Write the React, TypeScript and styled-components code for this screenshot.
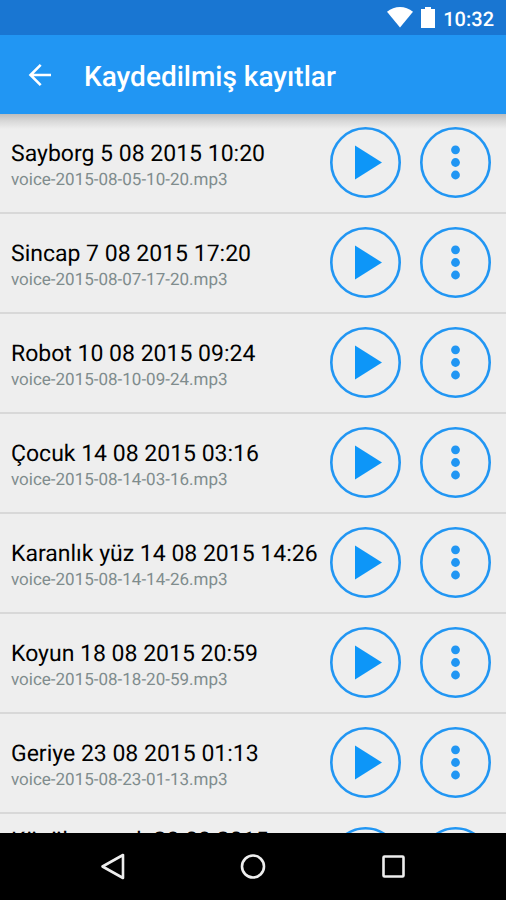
import React from "react";
import styled, { createGlobalStyle } from "styled-components";

const GlobalStyle = createGlobalStyle`
  * { box-sizing: border-box; }
  body {
    margin: 0;
    font-family: Roboto, "Noto Sans", sans-serif;
    text-rendering: geometricPrecision;
    background: #eeeeee;
  }
  button { margin: 0; padding: 0; border: 0; background: none; font: inherit; cursor: pointer; }
`;

const Screen = styled.div`
  display: flex;
  flex-direction: column;
  height: 100vh;
  overflow: hidden;
`;

const StatusBar = styled.div`
  flex: none;
  display: flex;
  align-items: center;
  justify-content: flex-end;
  gap: 8px;
  height: 35px;
  padding: 0 12px;
  background: #1976d2;
  color: #ffffff;
`;

const StatusIcon = styled.svg`
  display: block;
`;

const Clock = styled.time`
  padding-top: 2px;
  font-size: 20px;
  line-height: 24px;
  font-weight: 500;
`;

const AppBar = styled.header`
  flex: none;
  display: flex;
  align-items: center;
  height: 79px;
  padding: 0 24px;
  background: #2196f3;
  color: #ffffff;
`;

const BackButton = styled.button`
  display: flex;
  align-items: center;
  justify-content: center;
  width: 32px;
  height: 48px;
  margin-right: 28px;
  color: inherit;
`;

const Title = styled.h1`
  margin: 0;
  padding-top: 4px;
  font-size: 28px;
  line-height: 36px;
  font-weight: 500;
`;

const Content = styled.main`
  flex: 1;
  min-height: 0;
  overflow-y: auto;
  scrollbar-width: none;
  background: linear-gradient(#bdbdbd, #d8d8d8 7px, #eeeeee 15px);
`;

const RecordingList = styled.ul`
  margin: 0;
  padding: 0;
  list-style: none;
`;

const Recording = styled.li`
  display: flex;
  align-items: center;
  height: 100px;
  padding: 0 15px 1px 11px;
  border-bottom: 2px solid #d8d8d8;
`;

const Labels = styled.div`
  flex: 1;
  min-width: 0;
  padding-top: 8px;
`;

const Name = styled.div`
  font-size: 23px;
  line-height: 27px;
  color: #000000;
`;

const FileName = styled.div`
  font-size: 17px;
  line-height: 26px;
  color: #7f8c8d;
`;

const Actions = styled.div`
  flex: none;
  display: flex;
  gap: 19px;
  margin-left: 8px;
`;

const RoundButton = styled.button`
  display: block;
  width: 71px;
  height: 71px;
`;

const NavBar = styled.nav`
  flex: none;
  display: flex;
  align-items: center;
  justify-content: center;
  gap: 92px;
  height: 67px;
  background: #000000;
`;

const NavButton = styled.button`
  display: flex;
  align-items: center;
  justify-content: center;
  width: 48px;
  height: 48px;
`;

const recordings = [
  { name: "Sayborg 5 08 2015 10:20", file: "voice-2015-08-05-10-20.mp3" },
  { name: "Sincap 7 08 2015 17:20", file: "voice-2015-08-07-17-20.mp3" },
  { name: "Robot 10 08 2015 09:24", file: "voice-2015-08-10-09-24.mp3" },
  { name: "Çocuk 14 08 2015 03:16", file: "voice-2015-08-14-03-16.mp3" },
  { name: "Karanlık yüz 14 08 2015 14:26", file: "voice-2015-08-14-14-26.mp3" },
  { name: "Koyun 18 08 2015 20:59", file: "voice-2015-08-18-20-59.mp3" },
  { name: "Geriye 23 08 2015 01:13", file: "voice-2015-08-23-01-13.mp3" },
  { name: "Küçük yaratık 28 08 2015 14:15", file: "voice-2015-08-28-14-15.mp3" },
];

function PlayIcon() {
  return (
    <svg width="71" height="71" viewBox="0 0 71 71" aria-hidden="true">
      <circle cx="35.5" cy="35.5" r="34.2" fill="none" stroke="#2196f3" strokeWidth="2.6" />
      <path d="M25 18.500v34l27-17z" fill="#0d96f8" />
    </svg>
  );
}

function MoreIcon() {
  return (
    <svg width="71" height="71" viewBox="0 0 71 71" aria-hidden="true">
      <circle cx="35.5" cy="35.5" r="34.2" fill="none" stroke="#2196f3" strokeWidth="2.6" />
      <g fill="#2196f3">
        <circle cx="35.5" cy="22.800" r="4.400" />
        <circle cx="35.5" cy="35.500" r="4.400" />
        <circle cx="35.5" cy="48" r="4.400" />
      </g>
    </svg>
  );
}

export default function App() {
  return (
    <Screen>
      <GlobalStyle />
      <StatusBar>
        <StatusIcon width="26" height="21" viewBox="0 0 26 21" aria-hidden="true">
          <path d="M0 4.800C7.500-1.500 18.500-1.500 26 4.800L13 20.500z" fill="#fff" />
        </StatusIcon>
        <StatusIcon width="14" height="21" viewBox="0 0 14 21" aria-hidden="true">
          <path d="M4 0h6v2h4v19H0V2h4z" fill="#fff" />
        </StatusIcon>
        <Clock>10:32</Clock>
      </StatusBar>
      <AppBar>
        <BackButton type="button" aria-label="Geri">
          <svg width="24" height="24" viewBox="0 0 24 24" fill="none" stroke="currentColor" strokeWidth="2.6" aria-hidden="true">
            <path d="M23 12H2.500M12.700 1.800L2.500 12l10.200 10.200" />
          </svg>
        </BackButton>
        <Title>Kaydedilmiş kayıtlar</Title>
      </AppBar>
      <Content>
        <RecordingList>
          {recordings.map((r) => (
            <Recording key={r.file}>
              <Labels>
                <Name>{r.name}</Name>
                <FileName>{r.file}</FileName>
              </Labels>
              <Actions>
                <RoundButton type="button" aria-label={`Oynat: ${r.name}`}>
                  <PlayIcon />
                </RoundButton>
                <RoundButton type="button" aria-label={`Seçenekler: ${r.name}`}>
                  <MoreIcon />
                </RoundButton>
              </Actions>
            </Recording>
          ))}
        </RecordingList>
      </Content>
      <NavBar>
        <NavButton type="button" aria-label="Geri">
          <svg width="26" height="28" viewBox="0 0 26 28" aria-hidden="true">
            <path d="M23 2v23L2.500 13.500z" fill="none" stroke="#eee" strokeWidth="2.600" strokeLinejoin="round" />
          </svg>
        </NavButton>
        <NavButton type="button" aria-label="Ana ekran">
          <svg width="26" height="26" viewBox="0 0 26 26" aria-hidden="true">
            <circle cx="13" cy="12.500" r="11" fill="none" stroke="#eee" strokeWidth="2.600" />
          </svg>
        </NavButton>
        <NavButton type="button" aria-label="Son uygulamalar">
          <svg width="24" height="24" viewBox="0 0 24 24" aria-hidden="true">
            <rect x="2.500" y="1.500" width="20" height="20" rx="1" fill="none" stroke="#eee" strokeWidth="2.600" />
          </svg>
        </NavButton>
      </NavBar>
    </Screen>
  );
}
